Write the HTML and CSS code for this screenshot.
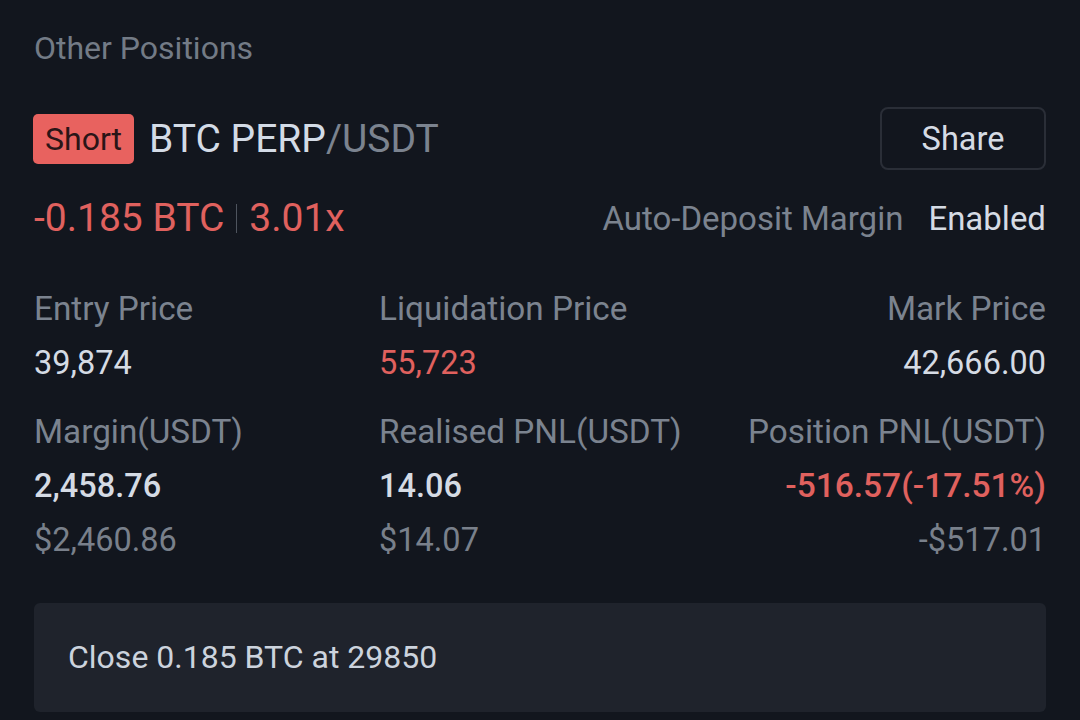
FILE: index.html
```html
<!DOCTYPE html>
<html>
<head>
<meta charset="utf-8">
<link rel="stylesheet" href="styles.css">
</head>
<body>
<div class="page">
  <div class="section-title">Other Positions</div>

  <div class="head-row">
    <span class="badge">Short</span>
    <span class="pair">BTC PERP<span class="quote">/USDT</span></span>
    <span class="spacer"></span>
    <button class="share">Share</button>
  </div>

  <div class="size-row">
    <span class="size">-0.185 BTC</span>
    <span class="sep"></span>
    <span class="size">3.01x</span>
    <span class="spacer"></span>
    <span class="label">Auto-Deposit Margin</span>
    <span class="enabled">Enabled</span>
  </div>

  <div class="grid">
    <div class="cell">
      <div class="line label">Entry Price</div>
      <div class="line value">39,874</div>
    </div>
    <div class="cell">
      <div class="line label">Liquidation Price</div>
      <div class="line value red">55,723</div>
    </div>
    <div class="cell right">
      <div class="line label">Mark Price</div>
      <div class="line value">42,666.00</div>
    </div>

    <div class="cell">
      <div class="line label">Margin(USDT)</div>
      <div class="line value strong">2,458.76</div>
      <div class="line sub">$2,460.86</div>
    </div>
    <div class="cell">
      <div class="line label">Realised PNL(USDT)</div>
      <div class="line value strong">14.06</div>
      <div class="line sub">$14.07</div>
    </div>
    <div class="cell right">
      <div class="line label">Position PNL(USDT)</div>
      <div class="line value strong red">-516.57(-17.51%)</div>
      <div class="line sub">-$517.01</div>
    </div>
  </div>

  <div class="close-box">Close 0.185 BTC at 29850</div>
</div>
</body>
</html>
```

FILE: styles.css
```css
html, body {
  margin: 0;
  padding: 0;
  background: #12161e;
}
body {
  font-family: Roboto, "Noto Sans", sans-serif;
  color: #d5dbe4;
  width: 1080px;
  height: 720px;
  overflow: hidden;
}
.page {
  padding: 28px 34px 0 34px;
}
.section-title {
  font-size: 32px;
  line-height: 40px;
  color: #737b86;
}
.head-row {
  display: flex;
  align-items: center;
  margin-top: 39px;
  height: 63px;
}
.badge {
  display: inline-block;
  background: #e8625f;
  color: #2a1517;
  font-size: 32px;
  line-height: 50px;
  height: 50px;
  padding: 0 12px;
  border-radius: 5px;
  margin-left: -1px;
}
.pair {
  font-size: 39px;
  color: #d3dbe6;
  margin-left: 15px;
}
.quote {
  color: #7b838f;
}
.spacer {
  flex: 1;
}
.share {
  font-family: Roboto, "Noto Sans", sans-serif;
  background: transparent;
  border: 2px solid #2a2e37;
  border-radius: 8px;
  color: #d5dbe4;
  font-size: 32.5px;
  width: 166px;
  height: 63px;
  padding: 0;
}
.size-row {
  display: flex;
  align-items: center;
  margin-top: 26px;
  height: 44px;
}
.size {
  font-size: 39px;
  color: #e0615e;
}
.sep {
  display: inline-block;
  width: 1px;
  height: 29px;
  background: #4e545e;
  margin: 0 12px 0 12px;
}
.size-row .label {
  font-size: 33px;
  color: #7b838f;
}
.enabled {
  font-size: 33px;
  color: #d5dbe4;
  margin-left: 25px;
}
.grid {
  display: grid;
  grid-template-columns: 345px 1fr 1fr;
  row-gap: 15px;
  margin-top: 42px;
}
.cell.right {
  text-align: right;
}
.line {
  font-size: 32.5px;
  line-height: 54px;
  white-space: nowrap;
}
.line.label {
  font-size: 33.3px;
}
.label {
  color: #7b838f;
}
.value {
  color: #d5dbe4;
}
.strong {
  font-weight: 500;
}
.value.strong.red {
  font-size: 33.5px;
}
.red {
  color: #e0615e;
}
.sub {
  color: #79808b;
}
.close-box {
  margin-top: 36px;
  background: #1f232c;
  border-radius: 6px;
  height: 109px;
  line-height: 109px;
  padding-left: 34px;
  font-size: 32px;
  color: #ccd3dd;
}
```
